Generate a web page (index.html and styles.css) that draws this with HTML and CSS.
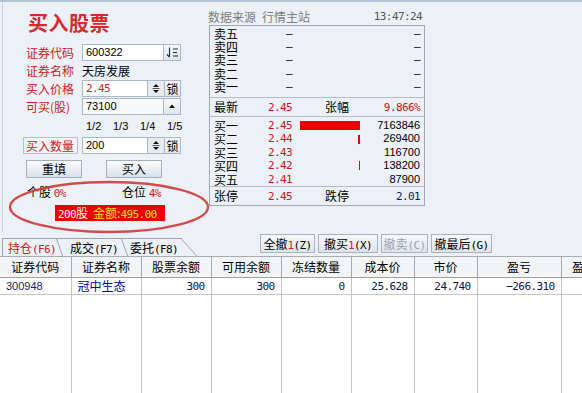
FILE: index.html
```html
<!DOCTYPE html>
<html>
<head>
<meta charset="utf-8">
<title>买入股票</title>
<link rel="stylesheet" href="styles.css">
</head>
<body>
<div class="win">
  <div class="topline"></div>
  <div class="top">
    <div class="left">
      <div class="title">买入股票</div>
      <div class="row first">
        <span class="lbl">证券代码</span>
        <span class="input w82 num">600322</span>
        <span class="sbtn"><svg width="13" height="11" viewBox="0 0 13 11"><path d="M3.5 0.5V10 M1 7.5L3.5 10" fill="none" stroke="#1a2a50" stroke-width="1.1"/><path d="M7 2H12 M7 5.5H11 M7 9H12" fill="none" stroke="#1a2a50" stroke-width="1.1"/></svg></span>
      </div>
      <div class="row">
        <span class="lbl">证券名称</span>
        <span class="plain">天房发展</span>
      </div>
      <div class="row">
        <span class="lbl">买入价格</span>
        <span class="input w66 mono redv">2.45</span>
        <span class="spin"><svg width="10" height="13" viewBox="0 0 10 13"><path d="M2 5L5 2L8 5Z M2 8L5 11L8 8Z" fill="#111"/><path d="M1.5 6.5H8.5" stroke="#555" stroke-width="1"/></svg></span>
        <span class="sbtn bl">锁</span>
      </div>
      <div class="row">
        <span class="lbl">可买(股)</span>
        <span class="input w82 num pale">73100</span>
        <span class="sbtn"><svg width="8" height="6" viewBox="0 0 8 6"><path d="M1 5L4 1.5L7 5Z" fill="#111"/></svg></span>
      </div>
      <div class="fracs num"><span>1/2</span><span>1/3</span><span>1/4</span><span>1/5</span></div>
      <div class="row qty">
        <span class="lbl boxed">买入数量</span>
        <span class="input w66 num">200</span>
        <span class="spin"><svg width="10" height="13" viewBox="0 0 10 13"><path d="M2 5L5 2L8 5Z M2 8L5 11L8 8Z" fill="#111"/><path d="M1.5 6.5H8.5" stroke="#555" stroke-width="1"/></svg></span>
        <span class="sbtn bl">锁</span>
      </div>
      <div class="btns"><span class="btn">重填</span><span class="btn b2">买入</span></div>
      <div class="stat"><span class="s1">个股 <b class="mono">0%</b></span><span class="s2">仓位 <b class="mono">4%</b></span></div>
      <div class="amount"><span class="wt"><span class="mono">200</span>股</span><span class="yl">金额:<span class="mono">495.00</span></span></div>
    </div>
    <div class="right">
      <div class="hdr"><span class="src"><span>数据来源</span><span>行情主站</span></span><span class="mono">13:47:24</span></div>
      <div class="box">
        <div class="sell">
          <div class="qrow"><span class="c1">卖五</span><span class="c2 mono">–</span><span class="c3"></span><span class="c4 mono">–</span></div>
          <div class="qrow"><span class="c1">卖四</span><span class="c2 mono">–</span><span class="c3"></span><span class="c4 mono">–</span></div>
          <div class="qrow"><span class="c1">卖三</span><span class="c2 mono">–</span><span class="c3"></span><span class="c4 mono">–</span></div>
          <div class="qrow"><span class="c1">卖二</span><span class="c2 mono">–</span><span class="c3"></span><span class="c4 mono">–</span></div>
          <div class="qrow"><span class="c1">卖一</span><span class="c2 mono">–</span><span class="c3"></span><span class="c4 mono">–</span></div>
        </div>
        <div class="line">
          <span class="c1">最新</span><span class="c2 mono red">2.45</span><span class="c3 l">张幅</span><span class="c4 mono red">9.866%</span>
        </div>
        <div class="buy">
          <div class="qrow"><span class="c1">买一</span><span class="c2 mono red">2.45</span><span class="c3"><i class="bar" style="width:60px"></i></span><span class="c4 num">7163846</span></div>
          <div class="qrow"><span class="c1">买二</span><span class="c2 mono red">2.44</span><span class="c3"><i class="bar" style="width:2px"></i></span><span class="c4 num">269400</span></div>
          <div class="qrow"><span class="c1">买三</span><span class="c2 mono red">2.43</span><span class="c3"></span><span class="c4 num">116700</span></div>
          <div class="qrow"><span class="c1">买四</span><span class="c2 mono red">2.42</span><span class="c3"><i class="bar" style="width:1px"></i></span><span class="c4 num">138200</span></div>
          <div class="qrow"><span class="c1">买五</span><span class="c2 mono red">2.41</span><span class="c3"></span><span class="c4 num">87900</span></div>
        </div>
        <div class="line last">
          <span class="c1">张停</span><span class="c2 mono red">2.45</span><span class="c3 l">跌停</span><span class="c4 mono blue">2.01</span>
        </div>
      </div>
    </div>
  </div>
  <div class="bottom">
    <div class="tabbar">
      <div class="tabs">
        <span class="tab t1">持仓<span class="mono">(F6)</span></span>
        <span class="tab t2">成交<span class="mono">(F7)</span></span>
        <span class="tab t3">委托<span class="mono">(F8)</span></span>
      </div>
      <div class="acts">
        <span class="abtn a1">全撤<span class="mono"><em>1</em>(Z)</span></span>
        <span class="abtn a2">撤买<span class="mono"><em>1</em>(X)</span></span>
        <span class="abtn a3 dis">撤卖<span class="mono">(C)</span></span>
        <span class="abtn a4">撤最后<span class="mono">(G)</span></span>
      </div>
    </div>
    <div class="grid">
      <table>
        <colgroup>
          <col style="width:71px"><col style="width:70px"><col style="width:70px"><col style="width:70px"><col style="width:70px"><col style="width:63px"><col style="width:63px"><col style="width:84px"><col style="width:70px">
        </colgroup>
        <thead>
          <tr><th>证券代码</th><th>证券名称</th><th>股票余额</th><th>可用余额</th><th>冻结数量</th><th>成本价</th><th>市价</th><th>盈亏</th><th>盈亏比例</th></tr>
        </thead>
        <tbody>
          <tr class="data">
            <td class="code num">300948</td><td class="name">冠中生态</td><td class="mono">300</td><td class="mono">300</td><td class="mono">0</td><td class="mono">25.628</td><td class="mono">24.740</td><td class="mono">−266.310</td><td class="mono"></td>
          </tr>
          <tr class="fill"><td></td><td></td><td></td><td></td><td></td><td></td><td></td><td></td><td></td></tr>
        </tbody>
      </table>
    </div>
  </div>
  <svg class="mark" width="582" height="393" viewBox="0 0 582 393"><ellipse cx="109" cy="207" rx="99" ry="25" fill="none" stroke="#CF3A3A" stroke-width="2.4" opacity="0.9"/></svg>
</div>
</body>
</html>
```
FILE: styles.css
```css
* { box-sizing: border-box; margin: 0; padding: 0; }
html, body { width: 582px; height: 393px; overflow: hidden; }
body {
  background: #EBF1F6;
  font-family: "Noto Sans CJK SC", "Noto Sans", sans-serif;
  font-size: 12px;
  line-height: 1;
  color: #000;
}
.mono { font-family: "DejaVu Sans Mono", monospace; font-size: 11px; letter-spacing: -0.6px; }
.num { font-family: "Liberation Sans", sans-serif; font-size: 11px; }
b { font-weight: normal; }
em { font-style: normal; color: #D42020; }

.win { position: relative; width: 582px; height: 393px; display: flex; flex-direction: column; }
.topline { height: 2px; flex: none; background: #B2C3D3; }
.top { display: flex; height: 230px; flex: none; padding-left: 2px; }

/* left form */
.left { width: 203px; border-left: 1px solid #C8D5E1; padding-left: 23px; display: flex; flex-direction: column; }
.title { margin-top: 10px; height: 22px; line-height: 22px; font-size: 20px; font-weight: 700; color: #D42B2B; padding-left: 2px; letter-spacing: 0.5px; }
.row { display: flex; align-items: center; height: 18px; }
.row.first { margin-top: 9px; }
.lbl { width: 56px; color: #D32020; line-height: 17px; white-space: nowrap; }
.plain { line-height: 17px; }
.input { height: 17px; background: #fff; border: 1px solid #A9B8C6; padding-left: 3px; display: flex; align-items: center; }
.input.pale { background: #F7F9FB; }
.w82 { width: 82px; }
.w66 { width: 66px; }
.redv { color: #D42020; }
.sbtn { width: 17px; height: 17px; border: 1px solid #A9B8C6; border-left: none; background: linear-gradient(#F6F9FC, #DCE5EE); display: flex; align-items: center; justify-content: center; line-height: 15px; }
.sbtn.bl { border-left: 1px solid #A9B8C6; }
.spin { width: 16px; height: 17px; border-top: 1px solid #A9B8C6; border-bottom: 1px solid #A9B8C6; background: #E4EBF2; display: flex; align-items: center; justify-content: center; }
.fracs { margin-top: 1px; height: 20px; line-height: 20px; padding-left: 60px; display: flex; }
.fracs span { width: 27px; }
.row.qty { margin-top: 1px; height: 17px; }
.boxed { margin-left: -3px; width: 55px; height: 17px; margin-right: 4px; border: 1px solid #C9B8C0; padding-left: 2px; background: #F1F4F7; line-height: 15px; }
.btns { margin-top: 6px; display: flex; height: 18px; }
.btn { width: 56px; height: 18px; border: 1px solid #A3B1BF; background: linear-gradient(#FBFCFD, #D8E2EB); text-align: center; line-height: 16px; }
.btn.b2 { margin-left: 24px; }
.stat { margin-top: 6px; height: 16px; line-height: 16px; display: flex; padding-left: 1px; }
.stat b { color: #D42020; }
.s1 { width: 95px; }
.amount { margin-top: 5px; margin-left: 29px; width: 110px; height: 16px; line-height: 16px; background: #E80000; padding-left: 3px; white-space: nowrap; display: flex; gap: 5px; }
.wt { color: #fff; }
.yl { color: #FFE300; }

/* right quote panel */
.right { width: 222px; padding-left: 4px; display: flex; flex-direction: column; }
.hdr { height: 23px; padding-top: 6px; line-height: 17px; display: flex; justify-content: space-between; color: #7E7E7E; margin-left: -1px; width: 214px; }
.src { display: flex; gap: 6px; }
.hdr .mono { color: #555; }
.box { width: 216px; height: 181px; border: 1px solid #9FAAB5; }
.sell { height: 72px; border-bottom: 1px solid #B3BDC7; padding-top: 0.5px; }
.buy { height: 70px; border-bottom: 1px solid #B3BDC7; padding-top: 2px; }
.qrow { height: 13.4px; line-height: 13.4px; display: flex; align-items: center; padding: 0 4px; }
.line { height: 19px; border-bottom: 1px solid #B3BDC7; display: flex; align-items: center; padding: 0 4px; }
.line.last { height: 18px; border-bottom: none; }
.c1 { width: 53px; }
.c2 { width: 25px; text-align: right; }
.c3 { width: 68px; display: flex; justify-content: flex-end; align-items: center; }
.c3.l { justify-content: flex-start; padding-left: 33px; }
.c4 { flex: 1; text-align: right; }
.red { color: #C81818; }
.blue { color: #10106A; }
.bar { display: block; height: 9px; background: #E80000; }

/* bottom */
.bottom { flex: 1; display: flex; flex-direction: column; min-height: 0; }
.tabbar { height: 24px; flex: none; display: flex; align-items: flex-end; padding-left: 2px; }
.tabs { display: flex; height: 18px; }
.tab { position: relative; height: 18px; line-height: 17px; border-top: 1px solid #99A5B1; white-space: nowrap; }
.tab::after { content: ""; position: absolute; top: 0; right: 0; width: 1px; height: 18px; background: #99A5B1; transform: skewX(20deg); transform-origin: top; }
.t1 { width: 55px; padding-left: 5px; color: #D02020; border-left: 1px solid #99A5B1; }
.t2 { width: 65px; padding-left: 13px; }
.t3 { width: 60px; padding-left: 8px; }
.t3::after { transform: skewX(42deg); }
.acts { display: flex; gap: 3px; margin-left: 78px; align-self: flex-start; margin-top: 2px; }
.abtn { height: 19px; border: 1px solid #A7B3BF; background: linear-gradient(#F8FAFC, #DCE4EC); line-height: 17px; text-align: center; white-space: nowrap; }
.a1 { width: 55px; }
.a2 { width: 60px; }
.a3 { width: 47px; }
.a4 { width: 61px; }
.dis { color: #9AA4AE; }

.grid { flex: 1; background: #fff; overflow: hidden; }
table { border-collapse: collapse; table-layout: fixed; width: 631px; height: 137px; }
th { height: 21px; background: #F3F4F6; border-top: 1px solid #A7AEB5; border-bottom: 1px solid #A0A0A0; border-right: 1px solid #A8A8A8; font-weight: normal; text-align: center; white-space: nowrap; overflow: hidden; }
td { border-right: 1px solid #C4C4C4; padding: 0 6px; text-align: right; white-space: nowrap; color: #101040; }
tr.data td { height: 17px; border-bottom: 1px solid #C8C8C8; }
td.code, td.name { text-align: left; }
td.code { color: #1A1A6E; }
td.name { color: #0000B0; }
tr.fill td { border-bottom: none; }

.mark { position: absolute; left: 0; top: 0; pointer-events: none; }
```
